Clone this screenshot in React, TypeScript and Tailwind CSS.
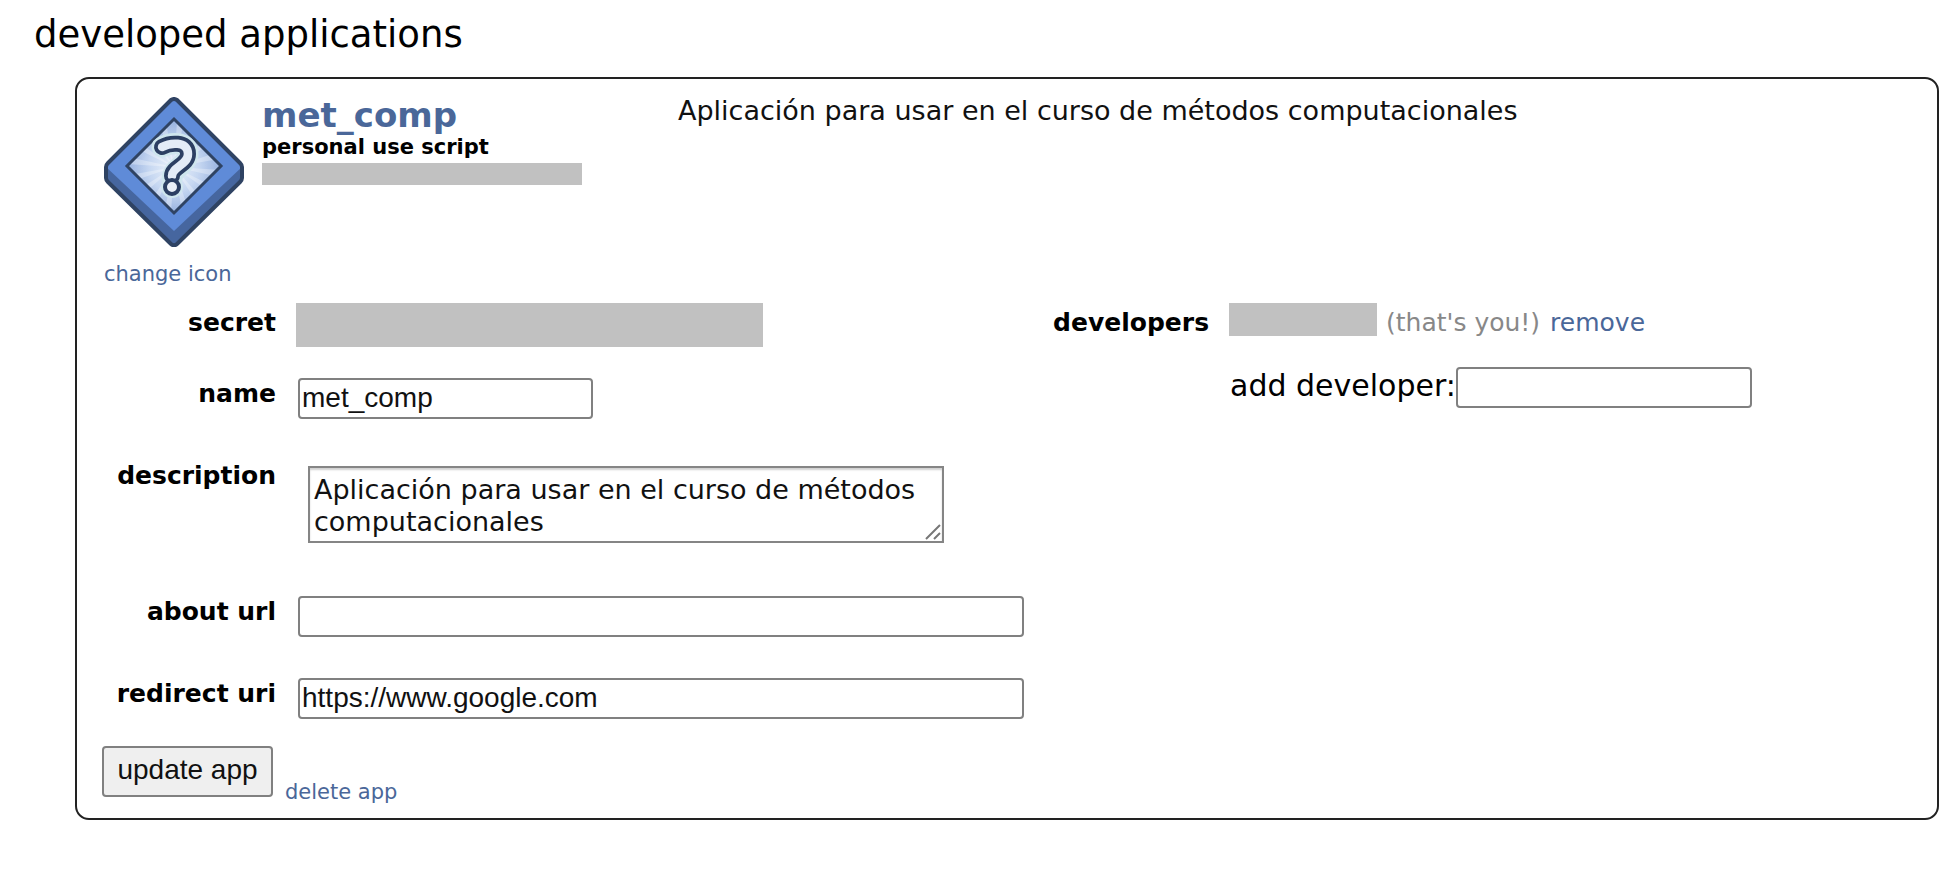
import React from "react";

const field =
  "h-[41px] rounded-[4px] border-2 border-[#808080] bg-white px-[2px] pb-[2px] font-['Liberation_Sans',sans-serif] text-[28px] leading-8 text-[#111] outline-none";
const labelText = "text-right text-[25px] leading-8 font-bold text-black";
const link = "text-[#4a6799]";

function AppIcon() {
  const rays = Array.from({ length: 16 }, (_, i) => i * 22.5 + 8);
  return (
    <svg viewBox="0 0 140 150" className="h-[150px] w-[140px]" role="img" aria-label="app icon">
      <defs>
        <radialGradient id="glow" gradientUnits="userSpaceOnUse" cx="70" cy="70" r="50">
          <stop offset="0" stopColor="#eef4fc" />
          <stop offset="0.5" stopColor="#c6d7f1" />
          <stop offset="1" stopColor="#8fabdc" />
        </radialGradient>
        <clipPath id="pane">
          <path d="M70 22 117 69 70 116 23 69Z" />
        </clipPath>
        <clipPath id="body">
          <path d="M66 3.5Q70 0 74 3.5L137 66Q138.500 68 138.500 70V81Q138.500 83 137 85L74 147Q70 150.500 66 147L3 85Q1.500 83 1.500 81V70Q1.500 68 3 66Z" />
        </clipPath>
      </defs>
      <g clipPath="url(#body)">
        <path d="M0 0H140V150H0Z" fill="#46669f" />
        <path d="M70 0 140 68 70 134 0 68Z" fill="#5f8bd8" />
      </g>
      <path
        d="M67 3Q70 1 73 3L136 66Q138 68 138 70V81Q138 83 136 85L73 147Q70 149.500 67 147L4 85Q2 83 2 81V70Q2 68 4 66Z"
        fill="none"
        stroke="#2f4363"
        strokeWidth="4"
        strokeLinejoin="round"
      />
      <path d="M70 22 117 69 70 116 23 69Z" fill="url(#glow)" />
      <g clipPath="url(#pane)" fill="#fff" opacity="0.3">
        {rays.map((a) => (
          <path key={a} d="M70 70 124 66V74Z" transform={`rotate(${a} 70 70)`} />
        ))}
      </g>
      <path d="M70 22 117 69 70 116 23 69Z" fill="none" stroke="#2f4363" strokeWidth="3" />
      <g fill="none" strokeLinejoin="round" strokeLinecap="round">
        <path d="M58 50C65 46 84 43 84 57C84 68 68 70 68 82" stroke="#cfe6ee" strokeWidth="21" />
        <circle cx="68" cy="90" r="11" fill="#cfe6ee" />
        <path d="M58 50C65 46 84 43 84 57C84 68 68 70 68 79" stroke="#2c3f63" strokeWidth="16" />
        <path d="M58 50C65 46 84 43 84 57C84 68 68 70 68 79" stroke="#e3ebf7" strokeWidth="8.500" />
      </g>
      <circle cx="68" cy="90" r="7" fill="#eaf0f9" stroke="#2c3f63" strokeWidth="4" />
    </svg>
  );
}

export default function App() {
  return (
    <main className="min-h-screen bg-white px-5 pt-3 font-['DejaVu_Sans',Verdana,sans-serif]">
      <h1 className="pl-[14px] text-[37px] leading-[46px] text-black">developed applications</h1>

      <section className="mt-[19px] ml-[55px] rounded-[14px] border-2 border-[#222] px-[25px] pt-4 pb-[21px]">
        <header className="flex items-start">
          <div className="w-[160px] pl-[2px] pt-[2px]">
            <AppIcon />
            <a href="#icon" className={`mt-[13px] block text-[21px] leading-7 ${link}`}>
              change icon
            </a>
          </div>
          <div className="w-[416px]">
            <h2 className="text-[34px] leading-10 font-bold">
              <a href="#app" className={link}>met_comp</a>
            </h2>
            <p className="text-[21px] leading-6 font-bold text-black">personal use script</p>
            <div className="mt-1 h-[22px] w-[320px] bg-[#c1c1c1]" />
          </div>
          <p className="flex-1 text-[27px] leading-8 text-[#111]">
            Aplicación para usar en el curso de métodos computacionales
          </p>
        </header>

        <form onSubmit={(e) => e.preventDefault()}>
          <div className="mt-[15px] grid grid-cols-[922fr_884fr]">
            <div className="grid grid-cols-[174px_1fr] content-start gap-x-5">
              <span className={`pt-1 ${labelText}`}>secret</span>
              <div className="h-[44px] w-[467px] bg-[#c1c1c1]" />

              <label htmlFor="name" className={`mt-[31px] ${labelText}`}>name</label>
              <input id="name" defaultValue="met_comp" className={`mt-[31px] ml-[2px] w-[295px] ${field}`} />

              <label htmlFor="description" className={`mt-[41px] ${labelText}`}>description</label>
              <div className="relative mt-[47px] ml-3 h-[77px] w-[636px]">
                <textarea
                  id="description"
                  defaultValue="Aplicación para usar en el curso de métodos computacionales"
                  className="block h-full w-full resize-none overflow-hidden border-2 border-[#858585] bg-white px-[4px] pt-[6px] text-[27px] leading-8 text-[#111] shadow-[inset_0_2px_2px_#d0d0d0] outline-none"
                />
                <svg viewBox="0 0 16 16" className="pointer-events-none absolute right-[3px] bottom-[3px] size-4" stroke="#777" strokeWidth="2">
                  <path d="M1 15 15 1M9 15 15 9" />
                </svg>
              </div>

              <label htmlFor="about" className={`mt-[53px] ${labelText}`}>about url</label>
              <input id="about" defaultValue="" className={`mt-[53px] ml-[2px] w-[726px] ${field}`} />

              <label htmlFor="redirect" className={`mt-[41px] ${labelText}`}>redirect uri</label>
              <input id="redirect" defaultValue="https://www.google.com" className={`mt-[41px] ml-[2px] w-[726px] ${field}`} />
            </div>

            <div className="grid grid-cols-[183px_1fr] content-start gap-x-5">
              <span className={`pt-1 ${labelText}`}>developers</span>
              <div className="flex items-start text-[25px] leading-8">
                <div className="h-[33px] w-[148px] bg-[#c1c1c1]" />
                <span className="pt-1 pl-[9px] text-[#888]">(that's you!)</span>
                <a href="#remove" className={`pt-1 pl-[10px] ${link}`}>remove</a>
              </div>
              <div className="col-start-2 mt-7 flex items-start pl-px">
                <label htmlFor="developer" className="text-[30px] leading-[38px] text-black">add developer:</label>
                <input id="developer" defaultValue="" className={`w-[296px] ${field}`} />
              </div>
            </div>
          </div>

          <div className="mt-[27px] flex items-end gap-3">
            <button
              type="submit"
              className="h-[51px] w-[171px] rounded-[4px] border-2 border-[#808080] bg-[#efefef] pb-1 font-['Liberation_Sans',sans-serif] text-[28px] leading-8 text-[#111]"
            >
              update app
            </button>
            <a href="#delete" className={`text-[21px] leading-[10px] ${link}`}>delete app</a>
          </div>
        </form>
      </section>
    </main>
  );
}
